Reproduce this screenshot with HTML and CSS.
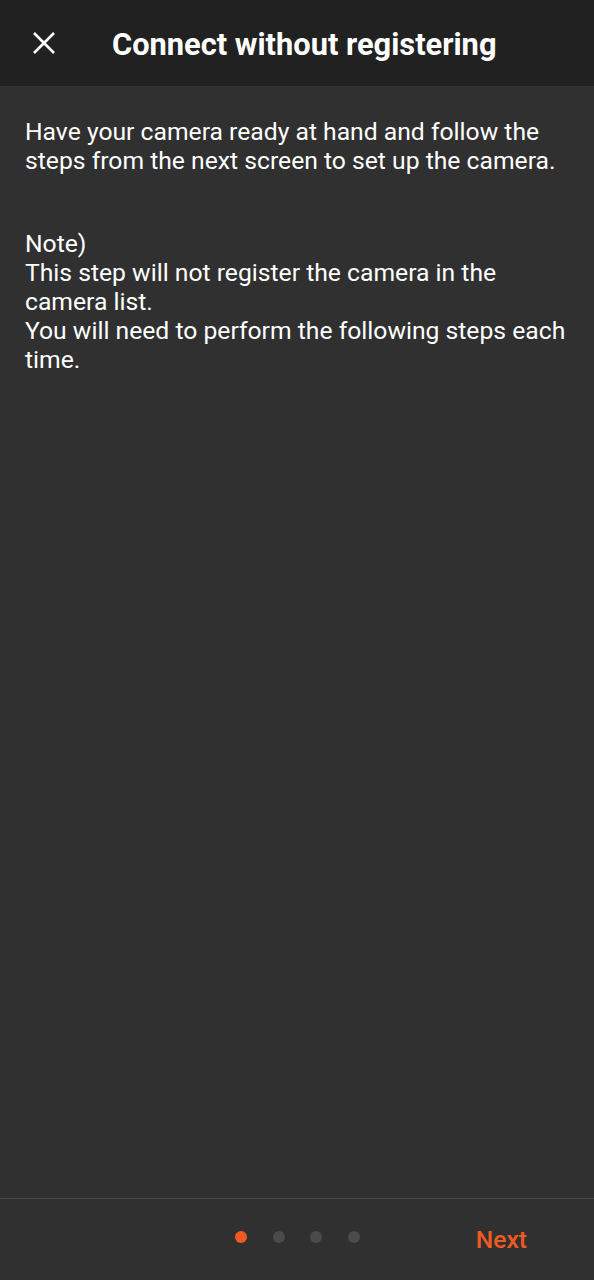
FILE: index.html
```html
<!DOCTYPE html>
<html lang="en">
<head>
    <meta charset="UTF-8">
    <meta name="viewport" content="width=device-width, initial-scale=1.0">
    <title>Connect without registering</title>
    <link rel="stylesheet" href="styles.css">
</head>
<body>
    <div class="screen">
        <header class="top-bar">
            <button class="close-button" aria-label="Close">
                <svg width="24" height="24" viewBox="0 0 24 24">
                    <path d="M2 2 L22 22 M22 2 L2 22" stroke="#ffffff" stroke-width="2.6" fill="none"/>
                </svg>
            </button>
            <h1 class="title">Connect without registering</h1>
        </header>

        <main class="content">
            <p>Have your camera ready at hand and follow the steps from the next screen to set up the camera.</p>
            <p>Note)<br>This step will not register the camera in the camera list.<br>You will need to perform the following steps each time.</p>
        </main>

        <footer class="bottom-bar">
            <div class="dots">
                <span class="dot active"></span>
                <span class="dot"></span>
                <span class="dot"></span>
                <span class="dot"></span>
            </div>
            <a class="next-button">Next</a>
        </footer>
    </div>
</body>
</html>
```

FILE: styles.css
```css
body { margin: 0; background-color: #303030; color: #ffffff; font-family: Roboto, "Liberation Sans", sans-serif; }
.screen { display: flex; flex-direction: column; height: 1280px; }

.top-bar {
    display: flex;
    align-items: center;
    height: 86px;
    background-color: #212121;
    flex-shrink: 0;
}
.close-button {
    display: flex;
    align-items: center;
    justify-content: center;
    width: 24px;
    height: 24px;
    margin-left: 32px;
    padding: 0;
    background: none;
    border: none;
    cursor: pointer;
}
.title {
    margin: 2px 0 0 56px;
    font-size: 30.8px;
    font-weight: 700;
    letter-spacing: 0;
}

.content { flex: 1; padding: 31px 20px 0 25px; }
.content p { margin: 0 0 54px 0; font-size: 24.7px; line-height: 29px; }

.bottom-bar {
    display: flex;
    align-items: center;
    height: 81px;
    border-top: 1px solid #4a4a4a;
}
.dots { display: flex; gap: 25.5px; margin-left: 235px; margin-top: -6px; }
.dot { width: 12px; height: 12px; border-radius: 50%; background-color: #4b4b4b; }
.dot.active { background-color: #f05a22; }
.next-button {
    margin-left: auto;
    margin-right: 67px;
    font-size: 24.6px;
    font-weight: 500;
    color: #f05a22;
    cursor: pointer;
}
```
